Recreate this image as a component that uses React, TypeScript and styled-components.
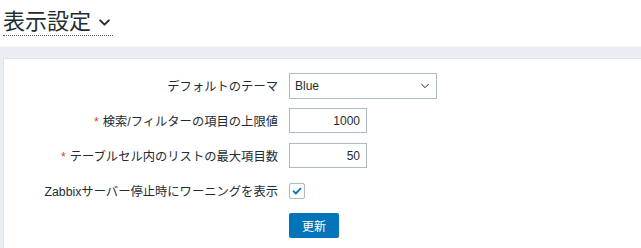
import styled, { createGlobalStyle } from 'styled-components';

const GlobalStyle = createGlobalStyle`
  html, body {
    margin: 0;
    padding: 0;
    background: #ffffff;
    font-family: "Liberation Sans", Arial, "Noto Sans CJK JP", sans-serif;
    color: #1f2c33;
    overflow: hidden;
  }
`;

const Page = styled.div`
  width: 641px;
  height: 248px;
  display: flex;
  flex-direction: column;
`;

const Header = styled.header`
  height: 46px;
  padding: 9px 0 0 3px;
  box-sizing: border-box;
`;

const Title = styled.h1`
  margin: 0;
  display: inline-flex;
  align-items: center;
  gap: 7px;
  font-size: 22px;
  font-weight: normal;
  line-height: 26px;
  color: #1f2c33;
  border-bottom: 1px dotted #55626b;
  padding-right: 2px;
  font-family: "Liberation Sans", "Noto Sans CJK JP", sans-serif;
`;

const Body = styled.main`
  flex: 1;
  background: #ebeef0;
  border-top: 1px solid #f4f6f7;
  padding: 11px 0 0 3px;
  display: flex;
`;

const Panel = styled.section`
  flex: 1;
  background: #ffffff;
  border: 1px solid #dfe4e7;
  border-right: none;
  border-bottom: none;
  padding-top: 14px;
`;

const Form = styled.div`
  display: grid;
  grid-template-columns: 274px 1fr;
  column-gap: 11px;
  row-gap: 10px;
  grid-auto-rows: 25px;
  align-items: center;
`;

const Label = styled.label`
  text-align: right;
  font-size: 12.3px;
  white-space: nowrap;
  color: #1f2c33;
`;

const Required = styled.span`
  color: #e33734;
  margin-right: 4px;
`;

const Field = styled.div`
  display: flex;
  align-items: center;
`;

const Select = styled.div`
  width: 148px;
  height: 26px;
  box-sizing: border-box;
  border: 1px solid #acbbc2;
  display: flex;
  align-items: center;
  justify-content: space-between;
  padding: 0 6px 0 5px;
  font-size: 12px;
  background: #fff;
`;

const Input = styled.div`
  width: 78px;
  height: 25px;
  box-sizing: border-box;
  border: 1px solid #acbbc2;
  display: flex;
  align-items: center;
  justify-content: flex-end;
  padding-right: 6px;
  font-size: 12px;
`;

const Checkbox = styled.div`
  width: 16px;
  height: 16px;
  box-sizing: border-box;
  border: 1px solid #acbbc2;
  border-radius: 2px;
  display: flex;
  align-items: center;
  justify-content: center;
`;

const Button = styled.button`
  width: 50px;
  height: 25px;
  border: none;
  border-radius: 2px;
  background: #0275b8;
  color: #ffffff;
  font-size: 12px;
  font-family: "Liberation Sans", "Noto Sans CJK JP", sans-serif;
  padding: 0;
`;

const Chevron = ({ size, width }: { size: number; width: number }) => (
  <svg width={size} height={size} viewBox="0 0 12 12" fill="none">
    <path d="M2 4l4 4 4-4" stroke="#1f2c33" strokeWidth={width} strokeLinecap="round" strokeLinejoin="round" />
  </svg>
);

export default function App() {
  return (
    <Page>
      <GlobalStyle />
      <Header>
        <Title>
          表示設定
          <Chevron size={13} width={1.8} />
        </Title>
      </Header>
      <Body>
        <Panel>
          <Form>
            <Label>デフォルトのテーマ</Label>
            <Field>
              <Select>
                <span>Blue</span>
                <Chevron size={10} width={1.2} />
              </Select>
            </Field>
            <Label>
              <Required>*</Required>検索/フィルターの項目の上限値
            </Label>
            <Field>
              <Input>1000</Input>
            </Field>
            <Label>
              <Required>*</Required>テーブルセル内のリストの最大項目数
            </Label>
            <Field>
              <Input>50</Input>
            </Field>
            <Label>Zabbixサーバー停止時にワーニングを表示</Label>
            <Field>
              <Checkbox>
                <svg width="10" height="10" viewBox="0 0 10 10" fill="none">
                  <path d="M1.5 5.2l2.3 2.3 4.7-4.8" stroke="#0275b8" strokeWidth="1.8" strokeLinecap="round" strokeLinejoin="round" />
                </svg>
              </Checkbox>
            </Field>
            <span />
            <Field>
              <Button>更新</Button>
            </Field>
          </Form>
        </Panel>
      </Body>
    </Page>
  );
}
